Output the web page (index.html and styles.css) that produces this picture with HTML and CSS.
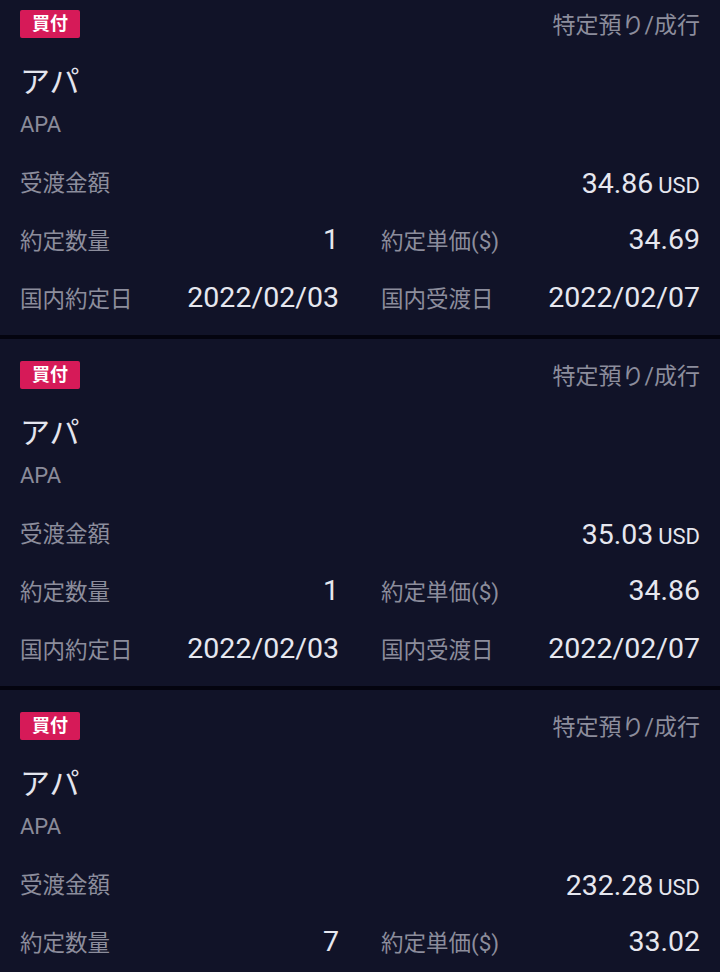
FILE: index.html
```html
<!DOCTYPE html>
<html lang="ja">
<head>
<meta charset="utf-8">
<link rel="stylesheet" href="styles.css">
</head>
<body>
<div class="list">
  <section class="card">
    <div class="head"><span class="badge">買付</span><span class="acct">特定預り/成行</span></div>
    <div class="name">アパ</div>
    <div class="ticker">APA</div>
    <div class="row full"><span class="label">受渡金額</span><span class="value">34.86<span class="unit">USD</span></span></div>
    <div class="grid">
      <div class="row"><span class="label">約定数量</span><span class="value">1</span></div>
      <div class="row"><span class="label">約定単価($)</span><span class="value">34.69</span></div>
      <div class="row"><span class="label">国内約定日</span><span class="value">2022/02/03</span></div>
      <div class="row"><span class="label">国内受渡日</span><span class="value">2022/02/07</span></div>
    </div>
  </section>
  <section class="card">
    <div class="head"><span class="badge">買付</span><span class="acct">特定預り/成行</span></div>
    <div class="name">アパ</div>
    <div class="ticker">APA</div>
    <div class="row full"><span class="label">受渡金額</span><span class="value">35.03<span class="unit">USD</span></span></div>
    <div class="grid">
      <div class="row"><span class="label">約定数量</span><span class="value">1</span></div>
      <div class="row"><span class="label">約定単価($)</span><span class="value">34.86</span></div>
      <div class="row"><span class="label">国内約定日</span><span class="value">2022/02/03</span></div>
      <div class="row"><span class="label">国内受渡日</span><span class="value">2022/02/07</span></div>
    </div>
  </section>
  <section class="card">
    <div class="head"><span class="badge">買付</span><span class="acct">特定預り/成行</span></div>
    <div class="name">アパ</div>
    <div class="ticker">APA</div>
    <div class="row full"><span class="label">受渡金額</span><span class="value">232.28<span class="unit">USD</span></span></div>
    <div class="grid">
      <div class="row"><span class="label">約定数量</span><span class="value">7</span></div>
      <div class="row"><span class="label">約定単価($)</span><span class="value">33.02</span></div>
      <div class="row"><span class="label">国内約定日</span><span class="value">2022/02/03</span></div>
      <div class="row"><span class="label">国内受渡日</span><span class="value">2022/02/07</span></div>
    </div>
  </section>
</div>
</body>
</html>
```

FILE: styles.css
```css
html, body {
  margin: 0;
  padding: 0;
  background: #111328;
  overflow: hidden;
}
body {
  font-family: Roboto, "Noto Sans CJK JP", sans-serif;
  color: #e6e7ef;
}
.list {
  margin-top: -12px;
  display: flex;
  flex-direction: column;
}
.card {
  background: #111328;
  padding: 22px 20px 9px;
  border-bottom: 4px solid #04040f;
}
.head {
  display: flex;
  justify-content: space-between;
  align-items: center;
  height: 28px;
}
.badge {
  background: #d61a58;
  color: #fff;
  font-weight: 700;
  font-size: 18px;
  line-height: 28px;
  height: 28px;
  padding: 0 12px;
  border-radius: 2px;
}
.acct {
  color: #8c8d9c;
  font-size: 23px;
  line-height: 28px;
  margin-top: 4px;
}
.name {
  margin-top: 24px;
  font-size: 30px;
  line-height: 40px;
  color: #e4e5ee;
}
.ticker {
  margin-top: 9px;
  font-size: 22px;
  line-height: 28px;
  color: #8a8b9a;
}
.full {
  margin-top: 13px;
}
.row {
  display: flex;
  justify-content: space-between;
  align-items: center;
  height: 58px;
}
.full .value {
  margin-top: 4px;
}
.grid {
  display: grid;
  grid-template-columns: 1fr 1fr;
  column-gap: 42px;
}
.label {
  color: #8c8d9c;
  font-size: 22.5px;
}
.value {
  font-size: 28.5px;
  color: #e6e7ef;
}
.unit {
  font-size: 22px;
  margin-left: 5px;
}
```
